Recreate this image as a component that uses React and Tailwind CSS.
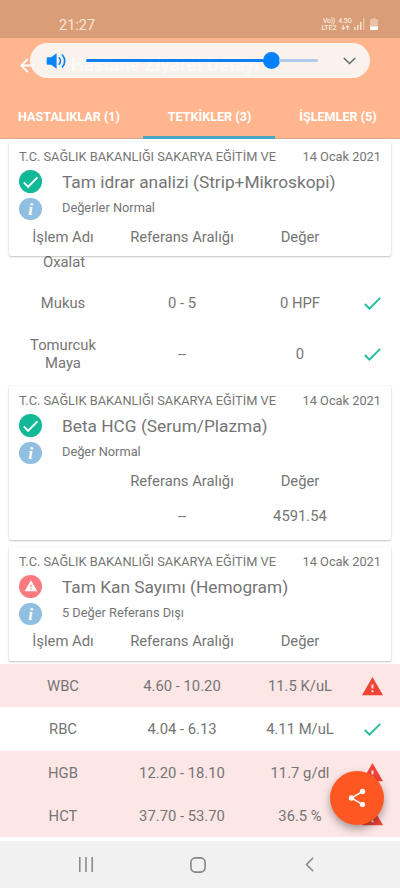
import React from "react";
import { MdWarning, MdShare } from "react-icons/md";

const TABS = [
  { label: "HASTALIKLAR (1)", width: "w-[143px] pr-[5px]" },
  { label: "TETKİKLER (3)", width: "w-[132px] pl-px", active: true },
  { label: "İŞLEMLER (5)", width: "w-[125px] pl-px" },
];

const URINE_ROWS = [
  { name: "Mukus", range: "0 - 5", value: "0 HPF", ok: true, height: "h-[50px]" },
  { name: "Tomurcuk Maya", range: "--", value: "0", ok: true, height: "h-[52px]" },
];

const BLOOD_ROWS = [
  { name: "WBC", range: "4.60 - 10.20", value: "11.5 K/uL", ok: false },
  { name: "RBC", range: "4.04 - 6.13", value: "4.11 M/uL", ok: true },
  { name: "HGB", range: "12.20 - 18.10", value: "11.7 g/dl", ok: false },
  { name: "HCT", range: "37.70 - 53.70", value: "36.5 %", ok: false },
];

function StatusBar() {
  return (
    <div className="flex h-[38px] items-start bg-[#d99d77] text-[#fbe6d9]">
      <span className="ml-[59px] mt-[17px] text-[14.5px] leading-[18px]">21:27</span>
      <div className="ml-auto mr-[22px] mt-[17px] flex items-start">
        <div className="w-4 text-center text-[7px] font-medium leading-[8px]">
          <div className="tracking-[-0.3px]">Vo))</div>
          <div className="-mt-px">LTE2</div>
        </div>
        <div className="ml-[1px] flex w-[14px] flex-col items-center text-[7px] font-medium leading-[8px]">
          <span className="tracking-[-0.3px]">4.5G</span>
          <svg className="h-[5px] w-[9px]" viewBox="0 0 9 5" fill="none" stroke="currentColor" strokeWidth="1.1">
            <path d="M2.2 0v4M.5 2.6l1.7 1.7 1.7-1.7M6.6 5V1M4.9 2.4 6.6.7l1.7 1.7" />
          </svg>
        </div>
        <svg className="ml-[2px] mt-px h-3 w-[11px]" viewBox="0 0 11 12" fill="currentColor">
          <path d="M0 9h1.4v3H0zM3 7h1.4v5H3zM6 4h1.4v8H6z" />
          <path d="M9 0h1.4v12H9z" opacity=".5" />
        </svg>
        <svg className="ml-[5px] mt-px h-3 w-2" viewBox="0 0 8 12" fill="currentColor">
          <path d="M2.4 0h3.2v1.2H7a1 1 0 0 1 1 1V9H0V2.2a1 1 0 0 1 1-1h1.4z" opacity=".5" />
          <path d="M0 8.5h8V11a1 1 0 0 1-1 1H1a1 1 0 0 1-1-1z" fill="#fff" />
        </svg>
      </div>
    </div>
  );
}

function VolumePanel() {
  return (
    <div className="absolute left-[30px] top-[5px] flex h-[35px] w-[340px] items-center rounded-full bg-[#faf8f6]/90">
      <svg className="ml-4 h-4 w-5" viewBox="0 0 20 16" fill="none" stroke="#0a84f5" strokeWidth="1.7" strokeLinecap="round">
        <path d="M1.5 4.2h3.7L10.6.3v15.4l-5.4-3.9H1.5a.8.8 0 0 1-.8-.8V5a.8.8 0 0 1 .8-.8z" fill="#0a84f5" stroke="none" />
        <path d="M13.2 4.8c1.6 1.8 1.6 4.6 0 6.4M16.3 2c3.2 3.3 3.2 8.7 0 12" />
      </svg>
      <div className="ml-5 flex w-[232px] items-center">
        <div className="h-[3px] flex-1 rounded-full bg-[#117ff0]" />
        <div className="-mx-px size-[17px] rounded-full bg-[#0780fa]" />
        <div className="h-[3px] w-[39px] rounded-r-full bg-[#b0cbec]" />
      </div>
      <svg className="ml-[25px] h-2 w-[13px]" viewBox="0 0 13 8" fill="none" stroke="#6b6967" strokeWidth="1.6">
        <path d="M.8 1l5.7 5.5L12.2 1" />
      </svg>
    </div>
  );
}

function AppBar() {
  return (
    <header className="h-[101px] bg-[#ffb68f]">
      <div className="relative flex h-[56px] items-center">
        <svg className="ml-5 -mt-[2px] h-[15px] w-[15px]" viewBox="0 0 15 15" fill="none" stroke="#fff" strokeWidth="1.8">
          <path d="M7.8.8 1.3 7.5l6.5 6.7M1.3 7.5H15" />
        </svg>
        <h1 className="ml-[36px] text-[18.5px] font-bold text-white">Hastane Ziyaret Detayı</h1>
        <VolumePanel />
      </div>
      <nav className="flex h-[45px] border-b border-[#d9a98c]">
        {TABS.map((t) => (
          <div
            key={t.label}
            className={`flex items-center justify-center whitespace-nowrap text-[12.6px] font-bold text-white ${t.width} ${
              t.active ? "-mb-px border-b-[3px] border-[#48a6c4] pt-1" : "pt-0.5"
            }`}
          >
            {t.label}
          </div>
        ))}
      </nav>
    </header>
  );
}

function StatusIcon({ ok }) {
  if (ok) {
    return (
      <svg className="size-[23px] shrink-0" viewBox="0 0 23 23" fill="none">
        <circle cx="11.5" cy="11.5" r="11.5" fill="#11b997" />
        <path d="M4.8 12.4l4.3 4.4 9.3-9.4" stroke="#fff" strokeWidth="1.9" />
      </svg>
    );
  }
  return (
    <div className="flex size-[23px] shrink-0 items-center justify-center rounded-full bg-[#fb7a80]">
      <MdWarning className="-mt-px size-[14px] text-white" />
    </div>
  );
}

function InfoIcon() {
  return (
    <div className="flex h-[22px] w-[23px] shrink-0 items-center justify-center rounded-full bg-[#90bfe2]">
      <span className="font-['Liberation_Serif'] text-[17px] font-bold italic leading-none text-white">i</span>
    </div>
  );
}

function Columns({ name, range, value, children, className = "" }) {
  return (
    <div className={`flex items-center text-center text-[14.8px] leading-[18px] ${className}`}>
      <div className="w-[120px] px-6">{name}</div>
      <div className="w-[118px] whitespace-nowrap">{range}</div>
      <div className="w-[118px] whitespace-nowrap">{value}</div>
      {children}
    </div>
  );
}

function ResultCard({ title, summary, ok, nameLabel, children, className = "" }) {
  return (
    <section className={`mx-[9px] rounded-[2px] bg-white pt-1.5 shadow-[0_1px_2px_rgba(0,0,0,0.22),0_0_2px_rgba(0,0,0,0.1)] ${className}`}>
      <div className="flex h-[18px] items-center justify-between whitespace-nowrap pl-2.5 pr-2.5 text-[12.8px]">
        <span>T.C. SAĞLIK BAKANLIĞI SAKARYA EĞİTİM VE</span>
        <span>14 Ocak 2021</span>
      </div>
      <div className="mt-0.5 flex h-7 items-center pl-2.5">
        <div className="-mt-0.5">
          <StatusIcon ok={ok} />
        </div>
        <h2 className="ml-5 whitespace-nowrap pt-px text-[17.3px]">{title}</h2>
      </div>
      <div className="flex h-[26px] items-center pl-2.5">
        <InfoIcon />
        <span className="-mt-[3px] ml-5 text-[12.8px]">{summary}</span>
      </div>
      <Columns
        className={`-ml-[6px] ${ok ? "h-[30px]" : "h-[28px]"}`}
        name={<span className="-mx-5 block whitespace-nowrap">{nameLabel}</span>}
        range="Referans Aralığı"
        value="Değer"
      />
      {children}
    </section>
  );
}

function RowIcon({ ok }) {
  if (ok) {
    return (
      <svg className="h-[13px] w-[17px] shrink-0" viewBox="0 0 17 13" fill="none" stroke="#1fbf9c" strokeWidth="1.9">
        <path d="M.8 7 5.5 11.6 16.2.9" />
      </svg>
    );
  }
  return <MdWarning className="size-[23px] shrink-0 text-[#f04438]" />;
}

function ResultRow({ row, className }) {
  return (
    <Columns
      className={`pl-[3px] ${row.ok ? "" : "bg-[#fde6e6]"} ${className}`}
      name={row.name}
      range={row.range}
      value={row.value}
    >
      <div className="flex w-[26px] justify-center">
        <RowIcon ok={row.ok} />
      </div>
    </Columns>
  );
}

function NavigationBar() {
  return (
    <footer className="flex h-[47px] items-center bg-[#f1f1f1] text-[#858585]">
      <svg className="ml-[78px] h-[15px] w-4" viewBox="0 0 16 15" fill="none" stroke="currentColor" strokeWidth="1.5">
        <path d="M1.8 0v15M8 0v15M14.2 0v15" />
      </svg>
      <svg className="ml-[96px] size-4" viewBox="0 0 16 16" fill="none" stroke="currentColor" strokeWidth="1.6">
        <rect x=".9" y=".9" width="14.2" height="14.2" rx="4.5" />
      </svg>
      <svg className="ml-[99px] h-[15px] w-[9px]" viewBox="0 0 9 15" fill="none" stroke="currentColor" strokeWidth="1.5">
        <path d="M8.2.7L1.5 7.5l6.7 6.8" />
      </svg>
    </footer>
  );
}

export default function App() {
  return (
    <div className="relative flex h-[888px] w-[400px] flex-col overflow-hidden bg-white font-[Roboto,sans-serif] text-[#757575]">
      <StatusBar />
      <AppBar />
      <main className="flex-1 overflow-hidden">
        <ResultCard
          className="relative z-10 mt-[3px] h-[114px]"
          title="Tam idrar analizi (Strip+Mikroskopi)"
          summary="Değerler Normal"
          nameLabel="İşlem Adı"
          ok
        />
        <Columns className="-mt-[10px] h-[32px] pl-1" name="Oxalat" />
        {URINE_ROWS.map((r) => (
          <ResultRow key={r.name} row={r} className={r.height} />
        ))}
        <ResultCard className="mt-[6px] h-[154px]" title="Beta HCG (Serum/Plazma)" summary="Değer Normal" ok>
          <Columns className="-ml-[6px] h-10" range="--" value="4591.54" />
        </ResultCard>
        <ResultCard
          className="mt-[7px] h-[114px]"
          title="Tam Kan Sayımı (Hemogram)"
          summary="5 Değer Referans Dışı"
          nameLabel="İşlem Adı"
          ok={false}
        />
        <div className="mt-[3px]">
          {BLOOD_ROWS.map((r) => (
            <ResultRow key={r.name} row={r} className="h-[43.3px] pt-px" />
          ))}
        </div>
      </main>
      <NavigationBar />
      <button className="absolute left-[330px] top-[771px] z-20 flex size-[54px] items-center justify-center rounded-full bg-[#ff5722] text-white shadow-[0_4px_8px_rgba(0,0,0,0.35)]">
        <MdShare className="size-[22px]" />
      </button>
    </div>
  );
}
